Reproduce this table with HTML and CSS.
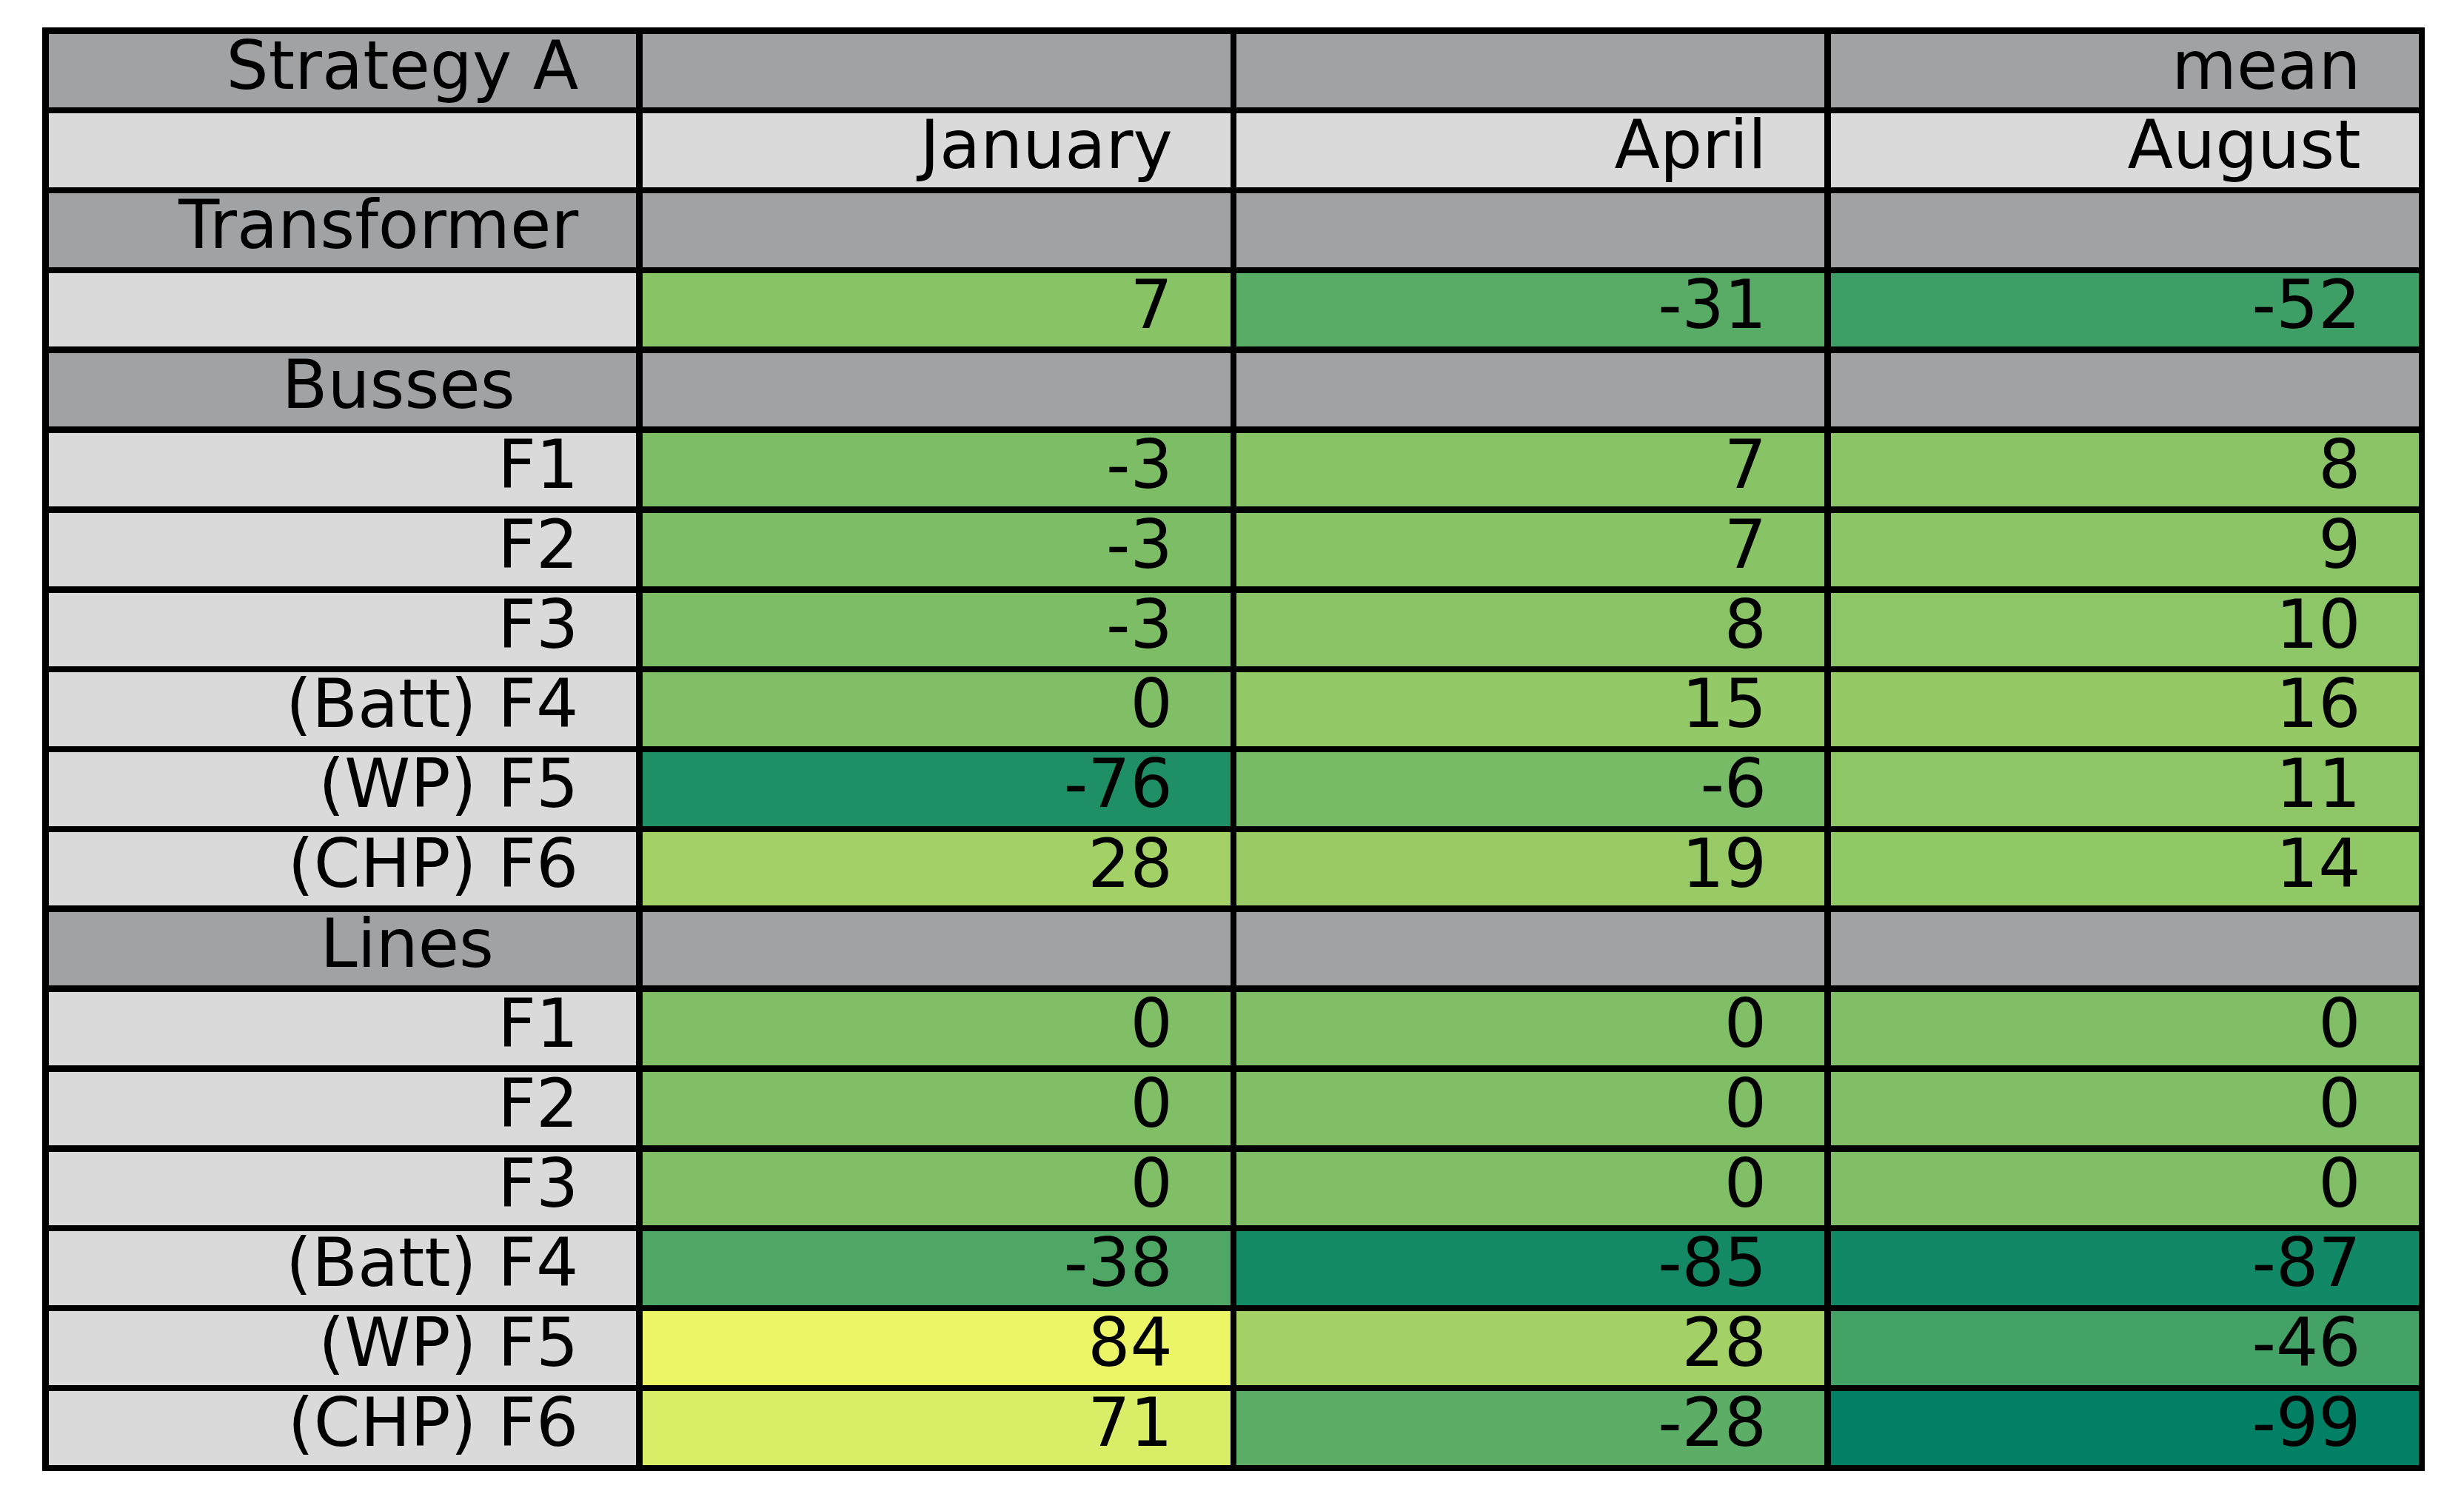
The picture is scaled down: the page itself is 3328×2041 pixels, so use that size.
FILE: index.html
```html
<!DOCTYPE html>
<html lang="en">
<head>
<meta charset="utf-8">
<title>Strategy A</title>
<link rel="stylesheet" href="styles.css">
</head>
<body>
<div class="sheet">
  <div class="cell hd">Strategy A</div><div class="cell hd"></div><div class="cell hd"></div><div class="cell hd">mean</div>
  <div class="cell lt"></div><div class="cell lt">January</div><div class="cell lt">April</div><div class="cell lt">August</div>

  <div class="cell hd">Transformer</div><div class="cell hd"></div><div class="cell hd"></div><div class="cell hd"></div>
  <div class="cell lt"></div><div class="cell" style="background:rgb(136,196,102)">7</div><div class="cell" style="background:rgb(88,172,102)">-31</div><div class="cell" style="background:rgb(61,158,102)">-52</div>

  <div class="cell hd">Busses   </div><div class="cell hd"></div><div class="cell hd"></div><div class="cell hd"></div>
  <div class="cell lt">F1</div><div class="cell" style="background:rgb(124,189,102)">-3</div><div class="cell" style="background:rgb(136,196,102)">7</div><div class="cell" style="background:rgb(138,196,102)">8</div>
  <div class="cell lt">F2</div><div class="cell" style="background:rgb(124,189,102)">-3</div><div class="cell" style="background:rgb(136,196,102)">7</div><div class="cell" style="background:rgb(139,197,102)">9</div>
  <div class="cell lt">F3</div><div class="cell" style="background:rgb(124,189,102)">-3</div><div class="cell" style="background:rgb(138,196,102)">8</div><div class="cell" style="background:rgb(140,198,102)">10</div>
  <div class="cell lt">(Batt) F4</div><div class="cell" style="background:rgb(128,191,102)">0</div><div class="cell" style="background:rgb(147,201,102)">15</div><div class="cell" style="background:rgb(148,201,102)">16</div>
  <div class="cell lt">(WP) F5</div><div class="cell" style="background:rgb(31,143,102)">-76</div><div class="cell" style="background:rgb(120,187,102)">-6</div><div class="cell" style="background:rgb(142,198,102)">11</div>
  <div class="cell lt">(CHP) F6</div><div class="cell" style="background:rgb(163,209,102)">28</div><div class="cell" style="background:rgb(152,203,102)">19</div><div class="cell" style="background:rgb(145,200,102)">14</div>

  <div class="cell hd">Lines    </div><div class="cell hd"></div><div class="cell hd"></div><div class="cell hd"></div>
  <div class="cell lt">F1</div><div class="cell" style="background:rgb(128,191,102)">0</div><div class="cell" style="background:rgb(128,191,102)">0</div><div class="cell" style="background:rgb(128,191,102)">0</div>
  <div class="cell lt">F2</div><div class="cell" style="background:rgb(128,191,102)">0</div><div class="cell" style="background:rgb(128,191,102)">0</div><div class="cell" style="background:rgb(128,191,102)">0</div>
  <div class="cell lt">F3</div><div class="cell" style="background:rgb(128,191,102)">0</div><div class="cell" style="background:rgb(128,191,102)">0</div><div class="cell" style="background:rgb(128,191,102)">0</div>
  <div class="cell lt">(Batt) F4</div><div class="cell" style="background:rgb(79,167,102)">-38</div><div class="cell" style="background:rgb(19,137,102)">-85</div><div class="cell" style="background:rgb(17,136,102)">-87</div>
  <div class="cell lt">(WP) F5</div><div class="cell" style="background:rgb(235,245,102)">84</div><div class="cell" style="background:rgb(163,209,102)">28</div><div class="cell" style="background:rgb(69,162,102)">-46</div>
  <div class="cell lt">(CHP) F6</div><div class="cell" style="background:rgb(218,237,102)">71</div><div class="cell" style="background:rgb(92,173,102)">-28</div><div class="cell" style="background:rgb(1,128,102)">-99</div>
</div>
</body>
</html>
```

FILE: styles.css
```css
html, body {
  margin: 0;
  padding: 0;
  background: #ffffff;
}

body {
  font-family: "DejaVu Sans", "Liberation Sans", sans-serif;
}

.sheet {
  margin: 37px 0 0 57px;
  width: 3218px;
  height: 1950px;
  box-sizing: border-box;
  padding: 8.5px;
  gap: 8.5px;
  background: #000000;
  display: grid;
  grid-template-columns: repeat(4, 1fr);
  grid-template-rows: repeat(18, 1fr);
}

.cell {
  display: flex;
  align-items: flex-start;
  justify-content: flex-end;
  padding: 0 78px 0 0;
  font-size: 90px;
  line-height: 86px;
  color: #000000;
  white-space: pre;
  min-width: 0;
  min-height: 0;
}

.hd {
  background: #a1a2a4;
}

.lt {
  background: #dadada;
}
```
